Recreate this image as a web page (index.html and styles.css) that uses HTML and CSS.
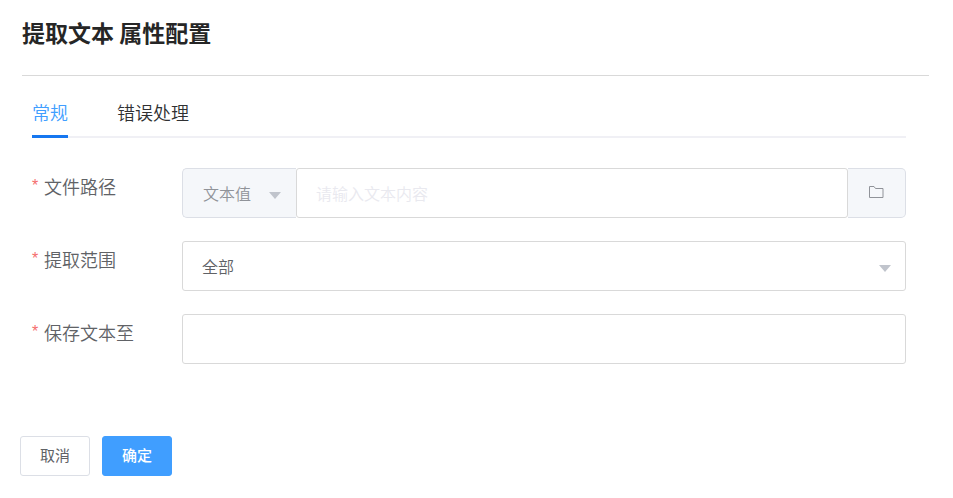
FILE: index.html
```html
<!DOCTYPE html>
<html lang="zh-CN">
<head>
<meta charset="utf-8">
<meta name="viewport" content="width=device-width, initial-scale=1">
<title>提取文本 属性配置</title>
<link rel="stylesheet" href="styles.css">
</head>
<body>
<header class="header">
  <h1 class="title">提取文本 属性配置</h1>
</header>
<form class="form">
  <div class="tabs" role="tablist">
    <button type="button" class="tab tab-active" role="tab" aria-selected="true">常规</button>
    <button type="button" class="tab" role="tab" aria-selected="false">错误处理</button>
  </div>
  <div class="row">
    <label class="label" for="path">文件路径</label>
    <div class="group">
      <div class="select-wrap prepend">
        <select class="select" aria-label="类型"><option>文本值</option></select>
        <svg class="caret" viewBox="0 0 12 7" aria-hidden="true"><path d="M0 0h12L6 7z"/></svg>
      </div>
      <input class="input middle" id="path" type="text" placeholder="请输入文本内容">
      <button type="button" class="append" aria-label="选择文件">
        <svg class="folder" viewBox="0 0 16 14" aria-hidden="true"><path d="M1.5 1.5H6L7.5 3.5H15V12.5H1.5Z"/></svg>
      </button>
    </div>
  </div>
  <div class="row">
    <label class="label" for="range">提取范围</label>
    <div class="select-wrap">
      <select class="select" id="range"><option>全部</option></select>
      <svg class="caret" viewBox="0 0 12 7" aria-hidden="true"><path d="M0 0h12L6 7z"/></svg>
    </div>
  </div>
  <div class="row">
    <label class="label" for="save">保存文本至</label>
    <input class="input" id="save" type="text">
  </div>
</form>
<footer class="footer">
  <button type="button" class="button">取消</button>
  <button type="button" class="button button-primary">确定</button>
</footer>
</body>
</html>
```
FILE: styles.css
```css
* {
  box-sizing: border-box;
}

body {
  margin: 0;
  background: #fff;
  color: #606266;
  font-family: "Noto Sans CJK SC", sans-serif;
  font-weight: 350;
}

button,
input,
select {
  margin: 0;
  font: inherit;
}

.header {
  margin: 0 24px 0 22px;
  padding: 16px 0 27px;
  border-bottom: 1px solid #d9d9d9;
}

.title {
  margin: 0;
  color: #262626;
  font-size: 23px;
  font-weight: 700;
  line-height: 32px;
}

.form {
  padding: 20px 47px 0 32px;
}

.tabs {
  display: flex;
  gap: 49px;
  margin-bottom: 30px;
  box-shadow: inset 0 -2px #f0f0f5;
}

.tab {
  padding: 0 0 6px;
  border: 0;
  border-bottom: 3px solid transparent;
  background: none;
  color: #303133;
  font-size: 18px;
  line-height: 33px;
}

.tab-active {
  border-bottom-color: #1677f0;
  color: #409eff;
}

.row {
  display: flex;
  margin-bottom: 23px;
}

.row:last-child {
  margin-bottom: 0;
}

.label {
  display: flex;
  flex: 0 0 150px;
  font-size: 18px;
  line-height: 36px;
}

.label::before {
  content: "*";
  width: 12px;
  color: #f56c6c;
  font-family: "Liberation Sans", sans-serif;
  font-weight: 400;
  font-size: 16px;
}

.input,
.select {
  width: 100%;
  height: 50px;
  min-width: 0;
  padding: 0 20px 1px 19px;
  border: 1px solid #d9d9d9;
  border-radius: 3px;
  background: #fff;
  color: #606266;
  font-size: 16px;
}

.input::placeholder {
  color: #e9e9ef;
}

.select {
  appearance: none;
}

.select-wrap {
  position: relative;
  flex: 1;
}

.caret {
  position: absolute;
  right: 15px;
  top: 24px;
  width: 12px;
  height: 7px;
  fill: #c0c4cc;
  pointer-events: none;
}

.group {
  display: flex;
  flex: 1;
}

.prepend {
  flex: 0 0 114px;
}

.prepend .select {
  padding-left: 20px;
  border-color: #dcdfe6;
  border-right: 0;
  border-radius: 5px 0 0 5px;
  background: #f5f7fa;
  color: #909399;
}

.middle {
  flex: 1;
}

.append {
  display: flex;
  flex: 0 0 58px;
  align-items: center;
  justify-content: center;
  padding: 0 2px 2px 0;
  border: 1px solid #dcdfe6;
  border-left: 0;
  border-radius: 0 5px 5px 0;
  background: #f5f7fa;
}

.folder {
  width: 16px;
  height: 14px;
  fill: none;
  stroke: #909399;
}

.footer {
  display: flex;
  gap: 12px;
  padding: 72px 20px 20px;
}

.button {
  width: 70px;
  height: 40px;
  padding: 0 0 4px;
  border: 1px solid #dcdfe6;
  border-radius: 3px;
  background: #fff;
  color: #606266;
  font-size: 15px;
  font-weight: 400;
}

.button-primary {
  border-color: #409eff;
  background: #409eff;
  color: #fff;
  font-weight: 500;
}
```
